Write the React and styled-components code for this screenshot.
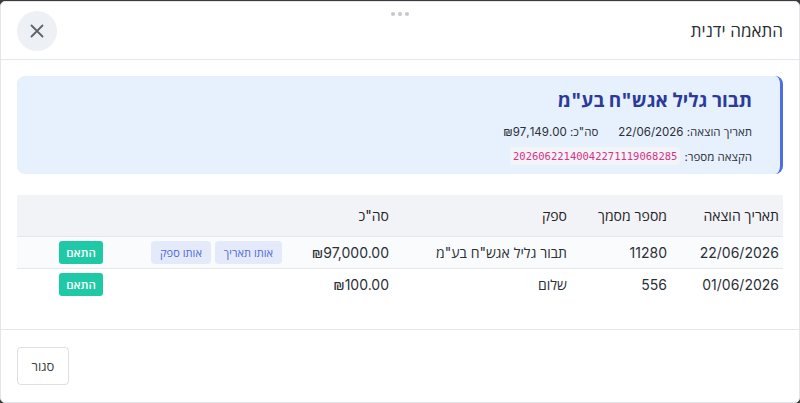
import React from 'react';
import styled, { createGlobalStyle } from 'styled-components';

const GlobalStyle = createGlobalStyle`
  html, body {
    margin: 0;
    padding: 0;
    background: #3b3b3b;
  }
  body {
    font-family: 'Inter', 'Open Sans', sans-serif;
    color: #212529;
  }
  * { box-sizing: border-box; }
`;

const rows = [
  {
    date: '22/06/2026',
    doc: '11280',
    supplier: 'תבור גליל אגש"ח בע"מ',
    total: '₪97,000.00',
    badges: ['אותו תאריך', 'אותו ספק'],
  },
  {
    date: '01/06/2026',
    doc: '556',
    supplier: 'שלום',
    total: '₪100.00',
    badges: [],
  },
];

function App() {
  return (
    <>
      <GlobalStyle />
      <Modal dir="rtl">
        <Header>
          <DragDots>
            <span />
            <span />
            <span />
          </DragDots>
          <Title>התאמה ידנית</Title>
          <CloseButton aria-label="close">
            <svg width="14" height="14" viewBox="0 0 14 14">
              <path
                d="M1.5 1.5 L12.5 12.5 M12.5 1.5 L1.5 12.5"
                stroke="#5f6368"
                strokeWidth="1.8"
                strokeLinecap="round"
              />
            </svg>
          </CloseButton>
        </Header>
        <Body>
          <InfoCard>
            <CardTitle>תבור גליל אגש"ח בע"מ</CardTitle>
            <InfoLine>
              <span>תאריך הוצאה: 22/06/2026</span>
              <span>סה"כ: ₪97,149.00</span>
            </InfoLine>
            <InfoLine>
              <span>הקצאה מספר:</span>
              <Code>20260622140042271119068285</Code>
            </InfoLine>
          </InfoCard>
          <Table>
            <colgroup>
              <col style={{ width: 112 }} />
              <col style={{ width: 100 }} />
              <col style={{ width: 178 }} />
              <col style={{ width: 107 }} />
              <col style={{ width: 179 }} />
              <col />
            </colgroup>
            <thead>
              <tr>
                <th>תאריך הוצאה</th>
                <th>מספר מסמך</th>
                <th>ספק</th>
                <th>סה"כ</th>
                <th />
                <th />
              </tr>
            </thead>
            <tbody>
              {rows.map((r, i) => (
                <Row key={r.doc} $shade={i === 0}>
                  <td>{r.date}</td>
                  <td>{r.doc}</td>
                  <td>{r.supplier}</td>
                  <td>{r.total}</td>
                  <td>
                    <Badges>
                      {r.badges.map((b) => (
                        <Badge key={b}>{b}</Badge>
                      ))}
                    </Badges>
                  </td>
                  <td>
                    <MatchButton>התאם</MatchButton>
                  </td>
                </Row>
              ))}
            </tbody>
          </Table>
        </Body>
        <Footer>
          <CloseTextButton>סגור</CloseTextButton>
        </Footer>
      </Modal>
    </>
  );
}

const Modal = styled.div`
  margin-top: 1px;
  width: 800px;
  height: 402px;
  background: #fff;
  border: 1px solid #e3e5ea;
  border-radius: 5px;
  display: flex;
  flex-direction: column;
  overflow: hidden;
`;

const Header = styled.div`
  position: relative;
  height: 58px;
  flex-shrink: 0;
  display: flex;
  align-items: center;
  justify-content: space-between;
  padding: 0 16px 0 16px;
  border-bottom: 1px solid #e5e7eb;
`;

const DragDots = styled.div`
  position: absolute;
  top: 10px;
  left: 50%;
  transform: translateX(-50%);
  display: flex;
  gap: 3px;
  span {
    width: 4px;
    height: 4px;
    border-radius: 50%;
    background: #c6c8d0;
  }
`;

const Title = styled.h2`
  margin: 0;
  font-size: 17px;
  font-weight: 400;
  color: #2b2f36;
`;

const CloseButton = styled.button`
  width: 40px;
  height: 40px;
  border-radius: 50%;
  border: none;
  background: #edf0f4;
  display: flex;
  align-items: center;
  justify-content: center;
  padding: 0;
  cursor: pointer;
`;

const Body = styled.div`
  flex: 1;
  padding: 16px 16px 0;
  border-bottom: 1px solid #e5e7eb;
`;

const InfoCard = styled.div`
  background: #e7f0fd;
  border-right: 3px solid #4d6de3;
  border-radius: 8px;
  padding: 12px 28px 10px 16px;
  height: 98px;
  display: flex;
  flex-direction: column;
  gap: 8px;
`;

const CardTitle = styled.h3`
  margin: 0 0 2px;
  font-size: 19px;
  font-weight: 700;
  color: #2a3b9b;
  line-height: 26px;
`;

const InfoLine = styled.div`
  display: flex;
  align-items: center;
  gap: 20px;
  font-size: 11.5px;
  color: #2b2f36;
  &:last-child {
    gap: 4px;
  }
`;

const Code = styled.code`
  font-family: 'DejaVu Sans Mono', 'Liberation Mono', monospace;
  font-size: 10.5px;
  color: #d63384;
  background: #f3f4f8;
  border-radius: 4px;
  padding: 3px 3px;
  direction: ltr;
`;

const Table = styled.table`
  margin-top: 21px;
  width: 100%;
  border-collapse: collapse;
  table-layout: fixed;
  font-size: 14px;
  th, td {
    text-align: right;
    padding: 0 4px;
  }
  th {
    height: 41px;
    background: #f1f3f6;
    font-weight: 400;
    color: #1f2328;
    border-bottom: 1px solid #e4e7ec;
  }
`;

const Row = styled.tr`
  background: ${(p) => (p.$shade ? '#fafbfd' : '#fff')};
  td {
    height: 32px;
    color: #2b2f36;
    border-bottom: ${(p) => (p.$shade ? '1px solid #e6e8ee' : 'none')};
  }
`;

const Badges = styled.div`
  display: flex;
  gap: 4px;
`;

const Badge = styled.span`
  font-size: 11px;
  color: #4f6bd6;
  background: #e4eafa;
  border-radius: 4px;
  padding: 4px 9px;
  white-space: nowrap;
`;

const MatchButton = styled.button`
  font-family: inherit;
  font-size: 11.5px;
  font-weight: 600;
  color: #fff;
  background: #20c9a6;
  border: none;
  border-radius: 3px;
  height: 23px;
  width: 44px;
  padding: 0;
  cursor: pointer;
`;

const Footer = styled.div`
  height: 72px;
  flex-shrink: 0;
  display: flex;
  align-items: center;
  justify-content: flex-end;
  padding: 0 16px;
`;

const CloseTextButton = styled.button`
  font-family: inherit;
  font-size: 13px;
  color: #3b3f45;
  background: #fff;
  border: 1px solid #dcdfe4;
  border-radius: 4px;
  width: 52px;
  height: 38px;
  cursor: pointer;
`;

export default App;
